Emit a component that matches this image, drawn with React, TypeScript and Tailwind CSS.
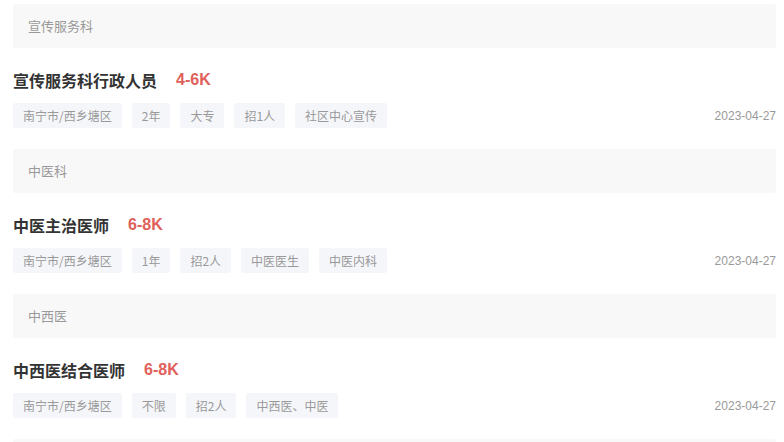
import React from "react";

interface Job {
  dept: string;
  title: string;
  salary: string;
  tags: string[];
  date: string;
}

const jobs: Job[] = [
  {
    dept: "宣传服务科",
    title: "宣传服务科行政人员",
    salary: "4-6K",
    tags: ["南宁市/西乡塘区", "2年", "大专", "招1人", "社区中心宣传"],
    date: "2023-04-27",
  },
  {
    dept: "中医科",
    title: "中医主治医师",
    salary: "6-8K",
    tags: ["南宁市/西乡塘区", "1年", "招2人", "中医医生", "中医内科"],
    date: "2023-04-27",
  },
  {
    dept: "中西医",
    title: "中西医结合医师",
    salary: "6-8K",
    tags: ["南宁市/西乡塘区", "不限", "招2人", "中西医、中医"],
    date: "2023-04-27",
  },
];

const cjk = "font-['Microsoft_YaHei','Noto_Sans_CJK_SC',sans-serif]";

export default function App() {
  return (
    <div className={`w-[784px] h-[442px] overflow-hidden bg-white pt-[4px] pl-[13px] pr-[8px] ${cjk}`}>
      {jobs.map((job) => (
        <section key={job.title} className="pb-[21px]">
          {/* Department bar */}
          <div className="h-[44px] bg-[#f8f8f8] rounded-[2px] flex items-center pl-[15px] text-[13px] text-[#999]">
            {job.dept}
          </div>

          {/* Title + salary */}
          <div className="mt-[20px] h-[24px] flex items-center">
            <h3 className="text-[16px] font-bold text-[#333] leading-none">{job.title}</h3>
            <span className="ml-[19px] text-[16px] font-bold text-[#e0605a] leading-none font-['Liberation_Sans',sans-serif]">
              {job.salary}
            </span>
          </div>

          {/* Tags + date */}
          <div className="mt-[11px] flex items-center justify-between">
            <div className="flex gap-[10px]">
              {job.tags.map((tag) => (
                <span
                  key={tag}
                  className="h-[25px] px-[10px] flex items-center bg-[#f5f6fa] text-[12px] text-[#999] rounded-[2px]"
                >
                  {tag}
                </span>
              ))}
            </div>
            <span className="text-[12px] text-[#999] font-['Liberation_Sans',sans-serif]">{job.date}</span>
          </div>
        </section>
      ))}
      <div className="h-[44px] bg-[#f8f8f8] rounded-[2px]" />
    </div>
  );
}
